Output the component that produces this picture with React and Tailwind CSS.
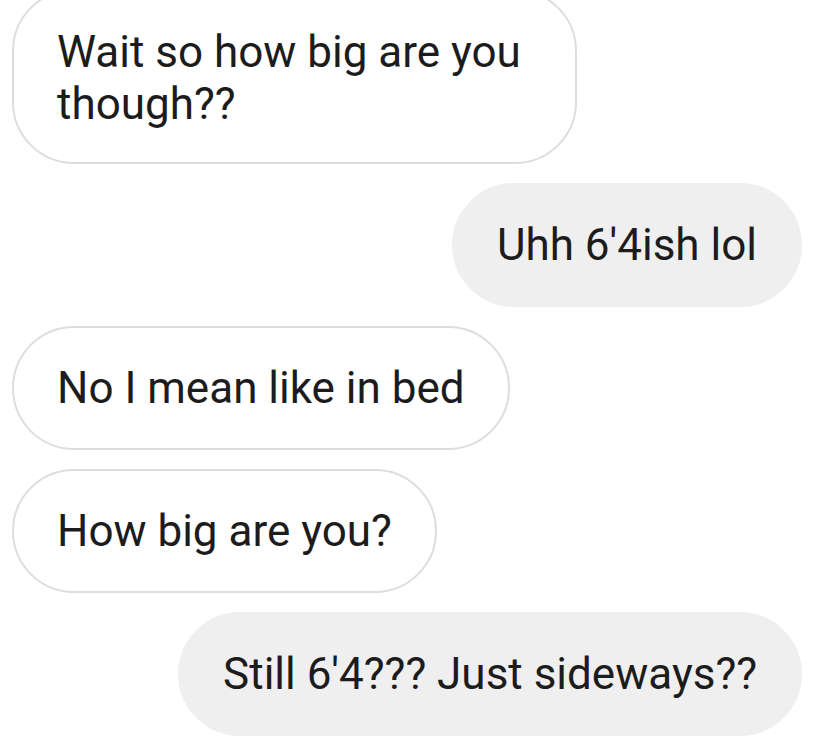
import React from 'react';

const messages = [
  { id: 1, from: 'them', text: 'Wait so how big are you though??', wide: true },
  { id: 2, from: 'me', text: "Uhh 6'4ish lol" },
  { id: 3, from: 'them', text: 'No I mean like in bed' },
  { id: 4, from: 'them', text: 'How big are you?' },
  { id: 5, from: 'me', text: "Still 6'4??? Just sideways??" },
];

function Bubble({ msg }) {
  const mine = msg.from === 'me';
  return (
    <div
      className={`${mine
        ? 'self-end mr-[26px] bg-[#efefef] border-2 border-[#efefef]'
        : 'self-start ml-[12px] bg-white border-2 border-[#dddddd]'
      } ${msg.wide
        ? 'w-[565px] pt-[35px] pb-[32px] leading-[52px]'
        : 'py-[35px] leading-[50px]'
      } rounded-[62px] px-[43px] text-[44px] text-[#1c1c1c]`}
    >
      {msg.text}
    </div>
  );
}

export default function App() {
  return (
    <div
      className="w-[828px] h-[744px] overflow-hidden bg-white"
      style={{ fontFamily: 'Roboto, "Noto Sans", sans-serif' }}
    >
      <div className="flex flex-col gap-[19px] mt-[-11px]">
        {messages.map(msg => (
          <Bubble key={msg.id} msg={msg} />
        ))}
      </div>
    </div>
  );
}
